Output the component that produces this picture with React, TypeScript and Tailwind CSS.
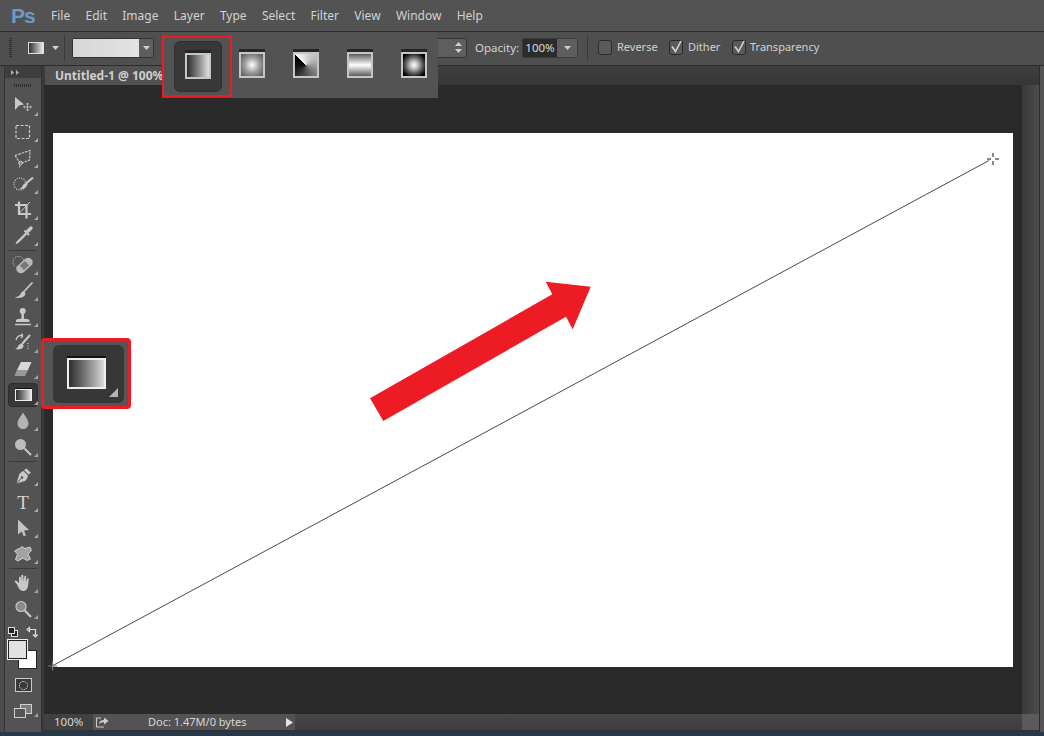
import type { ReactNode } from "react";

const MENU = ["File", "Edit", "Image", "Layer", "Type", "Select", "Filter", "View", "Window", "Help"];
const INK = "#c9c9c9";

function Icon({ children }: { children: ReactNode }) {
  return (
    <svg width="24" height="24" viewBox="0 0 24 24" fill="none" stroke={INK} strokeWidth="1">
      {children}
    </svg>
  );
}

// little flyout marker in the corner of a tool slot
function Corner() {
  return (
    <svg width="4" height="4" viewBox="0 0 4 4" className="absolute bottom-[3px] right-[3px]">
      <polygon points="4,0 4,4 0,4" fill="#a8a8a8" />
    </svg>
  );
}

function Tool({ children, active }: { children: ReactNode; active?: boolean }) {
  return (
    <div className="relative flex h-[26px] w-full items-center justify-center">
      {active && <div className="absolute inset-x-[3px] inset-y-[1px] rounded-sm border border-[#2e2e2e] bg-[#383838]" />}
      <div className="relative flex items-center justify-center">{children}</div>
      <Corner />
    </div>
  );
}

function Separator() {
  return <div className="mx-[4px] my-[1px] h-px bg-[#3a3a3a]" />;
}

function Swatch({ className }: { className: string }) {
  return <div className={`border-2 border-[#c6c6c6] shadow-[0_-3px_0_#262626] ${className}`} />;
}

function Caret() {
  return (
    <svg width="7" height="4" viewBox="0 0 7 4">
      <polygon points="0,0 7,0 3.5,4" fill="#d0d0d0" />
    </svg>
  );
}

function Checkbox({ checked }: { checked?: boolean }) {
  return (
    <div className="relative h-[15px] w-[14px] shrink-0 rounded-[3px] border border-[#2a2a2a] bg-[#5a5a5a]">
      {checked && (
        <svg width="14" height="15" viewBox="0 0 14 15" className="absolute -left-px -top-[2px]">
          <polyline points="3,7.500 6.500,12.500 12,2" fill="none" stroke="#d4d4d4" strokeWidth="1.600" />
        </svg>
      )}
    </div>
  );
}

function MenuBar() {
  return (
    <div className="flex h-[32px] items-center border-b border-[#2c2c2c] bg-[#535353]">
      <span className="ml-[11px] w-[40px] font-['Liberation_Sans',sans-serif] text-[21px] font-bold leading-none tracking-[-1px] text-[#6d9ac4]">Ps</span>
      <div className="flex gap-[15.300px] text-[12px] text-[#d2d2d2]">
        {MENU.map((m) => (
          <span key={m}>{m}</span>
        ))}
      </div>
    </div>
  );
}

function OptionsBar() {
  return (
    <div className="flex h-[34px] items-center border-b border-[#2c2c2c] bg-[#4f4f4f] pb-[2px] text-[11px] text-[#d2d2d2]">
      <div className="ml-[9px] h-[20px] w-[3px] bg-[repeating-linear-gradient(to_bottom,#2e2e2e_0,#2e2e2e_1px,transparent_1px,transparent_2px)]" />
      <div className="ml-[16px] h-[12px] w-[16px] border border-[#ddd] bg-gradient-to-r from-[#333] to-[#eee]" />
      <div className="ml-[8px]"><Caret /></div>
      <div className="ml-[5px] h-[24px] w-px bg-[#3a3a3a]" />
      <div className="ml-[7px] flex h-[20px] w-[82px] rounded-[2px] border border-[#333]">
        <div className="flex-1 bg-gradient-to-r from-[#d6d6d6] to-[#e4e4e4]" />
        <div className="flex w-[14px] items-center justify-center bg-[#5e5e5e]"><Caret /></div>
      </div>
      {/* mode select, mostly hidden by the flyout */}
      <div className="ml-[245px] flex h-[20px] w-[68px] items-center justify-end rounded-[2px] border border-[#333] bg-[#5e5e5e] pr-[4px]">
        <svg width="7" height="11" viewBox="0 0 7 11">
          <polygon points="3.5,0 7,4 0,4" fill="#d0d0d0" />
          <polygon points="0,7 7,7 3.5,11" fill="#d0d0d0" />
        </svg>
      </div>
      <span className="ml-[8px] w-[47px] text-[11.500px]">Opacity:</span>
      <div className="flex h-[20px] w-[56px] rounded-[2px] border border-[#3a3a3a]">
        <div className="flex flex-1 items-center justify-center bg-[#2b2b2b] text-[11.500px] text-[#dcdcdc]">100%</div>
        <div className="flex w-[20px] items-center justify-center bg-[#5e5e5e]"><Caret /></div>
      </div>
      <div className="ml-[9px] h-[24px] w-px bg-[#3a3a3a]" />
      <div className="ml-[10px]"><Checkbox /></div>
      <span className="ml-[5px] w-[52px]">Reverse</span>
      <Checkbox checked />
      <span className="ml-[5px] w-[44px]">Dither</span>
      <Checkbox checked />
      <span className="ml-[4px]">Transparency</span>
    </div>
  );
}

function Toolbar() {
  return (
    <div className="flex w-[38px] shrink-0 flex-col border-x border-[#333] bg-[#535353]">
      <div className="flex h-[12px] items-center bg-[#3e3e3e] pl-[6px] text-[8px] leading-none text-[#aaa]">
        <svg width="9" height="5" viewBox="0 0 9 5">
          <polygon points="0,0 3,2.5 0,5" fill="#b0b0b0" />
          <polygon points="5,0 8,2.5 5,5" fill="#b0b0b0" />
        </svg>
      </div>
      <div className="flex h-[15px] items-center justify-center">
        <div className="h-[3px] w-[18px] bg-[repeating-linear-gradient(to_right,#2e2e2e_0,#2e2e2e_1px,transparent_1px,transparent_2px)]" />
      </div>

      <Tool>
        <Icon>
          <polygon points="4,3 13,10.5 8,11.5 4,16" fill={INK} stroke="none" />
          <path d="M16.5 9v8M12.5 13h8M15.2 10.5l1.3-1.5 1.3 1.5M15.2 15.5l1.3 1.5 1.3-1.5M14 11.7l-1.5 1.3 1.5 1.3M19 11.7l1.5 1.3-1.5 1.3" strokeWidth="0.8" />
        </Icon>
      </Tool>
      <Tool>
        <Icon>
          <rect x="5" y="5.5" width="13.5" height="13" strokeDasharray="3 1.5" strokeWidth="1.2" />
        </Icon>
      </Tool>
      <Tool>
        <Icon>
          <path d="M4 9.5L19 4.5 18.5 14 9.5 17.5Z" strokeDasharray="2.5 1" strokeWidth="1.2" />
          <circle cx="9.5" cy="17" r="1.8" strokeWidth="1" />
          <path d="M9 19l-.5 2.5" />
        </Icon>
      </Tool>
      <Tool>
        <Icon>
          <circle cx="9" cy="12" r="6" strokeDasharray="1.2 1.2" strokeWidth="1.2" />
          <path d="M22 5.5L15 11.5" strokeWidth="2.2" />
          <path d="M15.5 11c-2 0-3 .7-4 3-.5 1.3-2 2.5-3.5 2.8 3.5 1 7.5-.5 8.500-4.500Z" fill={INK} stroke="none" />
        </Icon>
      </Tool>
      <Tool>
        <Icon>
          <path d="M8 3.500V16h12M4 7h11.500V20.500" strokeWidth="2.200" />
          <path d="M8 15.500L19 4" strokeWidth="1" />
        </Icon>
      </Tool>
      <Tool>
        <Icon>
          <path d="M17 7L20 4" strokeWidth="3.500" strokeLinecap="round" />
          <path d="M13.500 6.500L18 11" strokeWidth="2" />
          <path d="M15 9L6.500 17.500 5 19.500 7 18.500 15.500 10" fill="#3a3a3a" strokeWidth="1.200" />
        </Icon>
      </Tool>
      <Separator />
      <Tool>
        <Icon>
          <circle cx="7.500" cy="9" r="5.500" strokeDasharray="1.2 1.2" strokeWidth="1" />
          <rect x="4" y="8" width="19" height="9" rx="4.500" transform="rotate(-42 13.500 12.500)" fill="#b8b8b8" stroke="none" />
          <rect x="10" y="9.500" width="7" height="6" transform="rotate(-42 13.500 12.500)" fill="#777" stroke="none" />
        </Icon>
      </Tool>
      <Tool>
        <Icon>
          <path d="M21.500 3.500L13 12.500" strokeWidth="1.800" />
          <path d="M12.500 12c-1.500.500-2.500 1.500-3 3-.500 1.500-2 2.500-6 3.500 4 .800 9 .500 10.500-2.500.600-1.300.500-2.700-1.500-4Z" fill={INK} stroke="none" />
        </Icon>
      </Tool>
      <Tool>
        <Icon>
          <circle cx="11.700" cy="6" r="3" fill={INK} stroke="none" />
          <path d="M11.700 8v6" strokeWidth="2.500" />
          <path d="M5 15.500c0-1.500 3-1.800 6.700-1.800s6.700.300 6.700 1.800V17H5Z" fill={INK} stroke="none" />
          <path d="M4 19.500h16" strokeWidth="1.500" />
        </Icon>
      </Tool>
      <Tool>
        <Icon>
          <path d="M5 9c1-3.500 3.500-5 7-4.500M12 4.500L10 2.800M12 4.500L10 7" strokeWidth="1.300" />
          <path d="M19 4L11 13" strokeWidth="2" />
          <path d="M10.500 12.500c-2 .500-3 1.500-3.500 3-.400 1.200-1.500 2-3 2.500 3 .800 7 .500 8.300-2 .500-1.200.200-2.500-1.800-3.500Z" fill={INK} stroke="none" />
          <path d="M17 12v7" strokeDasharray="1 1.500" strokeWidth="1.200" />
        </Icon>
      </Tool>
      <Tool>
        <Icon>
          <path d="M10 5h10.500l-3.500 8H6Z" fill="#d8d8d8" stroke="none" />
          <path d="M6 13h11l-3 6H3.500Z" fill="#9a9a9a" stroke="none" />
        </Icon>
      </Tool>
      <Tool active>
        <div className="h-[12px] w-[17px] border border-[#eee] bg-gradient-to-r from-[#2e2e2e] to-[#e6e6e6] shadow-[0_-1px_0_#111]" />
      </Tool>
      <Tool>
        <Icon>
          <path d="M12 3.500c-2 3.500-5.500 7.500-5.500 11a5.500 5.500 0 0 0 11 0c0-3.500-3.500-7.500-5.500-11Z" fill="#b4b4b4" stroke="none" />
        </Icon>
      </Tool>
      <Tool>
        <Icon>
          <circle cx="9.500" cy="9.500" r="5.500" fill="#bdbdbd" stroke="none" />
          <path d="M13.500 13.500L20 20" strokeWidth="2" />
        </Icon>
      </Tool>
      <Separator />
      <Tool>
        <Icon>
          <path d="M15.500 4.500L20 9l-2.500 1.500-4.500-4.500Z" fill={INK} stroke="none" />
          <path d="M12.500 7L17 11.500c-.500 2.500-1.500 4.500-3 5.500l-8.500 2.500L8 11c1-2 2.500-3.500 4.500-4Z" fill={INK} stroke="none" />
          <path d="M5.500 19.500L10.500 14" stroke="#535353" />
          <circle cx="11" cy="13.500" r="1.200" fill="#535353" stroke="none" />
        </Icon>
      </Tool>
      <Tool>
        <span className="font-['Liberation_Serif',serif] text-[19px] leading-none text-[#d4d4d4]">T</span>
      </Tool>
      <Tool>
        <Icon>
          <polygon points="7,3.500 18,14 13,14.500 15,19.500 12.500,20 10.800,15.500 7,18.500" fill="#c4c4c4" stroke="none" />
        </Icon>
      </Tool>
      <Tool>
        <Icon>
          <path d="M10.500 4.500l3.500 2 5-1.500 1.500 3.500-3.500 3.500 2.500 5-3.500 1.500-4-2.500-5 3-2.500-1.500 2-5.500-3-3 3.500-2 2-.500Z" fill="#a2a2a2" stroke="#d0d0d0" />
        </Icon>
      </Tool>
      <Separator />
      <Tool>
        <Icon>
          <path d="M6 13.500L4 11c-.800-1 .500-2 1.500-1.200L8 12V6.500c0-1.300 1.700-1.300 1.800 0L10.300 10.500V4.800c0-1.300 1.900-1.300 2 0l.300 5.700.800-5c.200-1.200 1.900-1 1.800.200l-.500 5.500 1.500-3.500c.500-1 1.900-.500 1.600.600L17 15c-.500 3-2 5-5 5-3 0-4.500-3-6-6.500Z" fill="#c8c8c8" stroke="none" />
        </Icon>
      </Tool>
      <Tool>
        <Icon>
          <circle cx="10" cy="9.500" r="5" fill="#8a8a8a" stroke="#c9c9c9" strokeWidth="1.200" />
          <path d="M13.800 13.500L20 20" strokeWidth="2.200" />
        </Icon>
      </Tool>

      {/* default colours and swap */}
      <div className="mt-[3px] flex h-[14px] items-center justify-between px-[3px]">
        <div className="relative h-[10px] w-[10px]">
          <div className="absolute bottom-0 right-0 h-[7px] w-[7px] border border-[#ddd] bg-[#222]" />
          <div className="absolute left-0 top-0 h-[7px] w-[7px] border border-[#ddd] bg-[#222]" />
        </div>
        <svg width="12" height="12" viewBox="0 0 12 12" fill="none" stroke="#ddd" strokeWidth="1.200">
          <path d="M3 3.500h6.500V9M1 3.500l2.500-2v4ZM9.500 11l-2-2h4Z" />
        </svg>
      </div>

      {/* foreground / background */}
      <div className="relative mx-[3px] mt-[1px] h-[29px] w-[29px]">
        <div className="absolute bottom-0 right-0 h-[19px] w-[19px] border border-[#222] bg-white" />
        <div className="absolute left-0 top-0 h-[19px] w-[19px] border border-[#222] bg-[#e2e2e2] outline outline-1 outline-[#eee]" />
      </div>

      <div className="mt-[9px] flex h-[14px] justify-center">
        <div className="flex h-[14px] w-[17px] items-center justify-center border border-[#ccc] bg-[#3a3a3a]">
          <div className="h-[9px] w-[9px] rounded-full border border-dotted border-[#eee]" />
        </div>
      </div>
      <div className="relative mt-[12px] flex h-[16px] justify-center">
        <svg width="18" height="14" viewBox="0 0 18 14">
          <rect x="6.500" y="0.500" width="11" height="9" fill="#7c7c7c" stroke="#d0d0d0" />
          <rect x="0.500" y="4.500" width="11" height="9" fill="#555" stroke="#d0d0d0" />
        </svg>
        <Corner />
      </div>
    </div>
  );
}

function DocWindow() {
  return (
    <div className="flex min-w-0 flex-1 flex-col">
      <div className="flex h-[19px] bg-gradient-to-b from-[#3f3f3f] to-[#363636]">
        <div className="ml-px w-[180px] overflow-hidden whitespace-nowrap bg-[#515151] pl-[10px] text-[12px] font-bold leading-[19px] text-[#cfcfcf]">
          Untitled-1 @ 100% (RGB/8)
        </div>
      </div>
      <div className="flex flex-1">
        <div className="flex-1 bg-[#2a2a2a] pl-[9px] pt-[48px]">
          <div className="h-[534px] w-[960px] bg-white" />
        </div>
        <div className="w-[17px] bg-gradient-to-r from-[#3a3a3a] to-[#4b4b4b]" />
      </div>
      <div className="flex h-[16px] bg-[#414141] text-[11.500px] leading-[16px] text-[#d6d6d6]">
        <div className="w-[49px] pl-[10px]">100%</div>
        <div className="flex w-[202px] items-center bg-[#535353] pl-[3px]">
          <svg width="13" height="12" viewBox="0 0 13 12" fill="none" stroke="#cfcfcf" strokeWidth="1">
            <path d="M8 11H0.500V2H5" />
            <path d="M3 8c.500-2.500 2-4 5-4V1.500L12.500 5 8 8.500V6.200C6 6.200 4.500 6.700 3 8Z" fill="#cfcfcf" stroke="none" />
          </svg>
          <span className="ml-[39px] w-[138px] text-[11px]">Doc: 1.47M/0 bytes</span>
          <svg width="7" height="9" viewBox="0 0 7 9">
            <polygon points="0,0 7,4.500 0,9" fill="#e4e4e4" />
          </svg>
        </div>
        <div className="flex-1 bg-gradient-to-b from-[#474747] to-[#3d3d3d]" />
        <div className="w-[17px] bg-[#5a5a5a]" />
      </div>
      <div className="h-[2px] bg-[#333]" />
    </div>
  );
}

function GradientFlyout() {
  const swatch = "h-[26px] w-[26px]";
  return (
    <div className="absolute left-[162px] top-[32px] flex h-[66px] w-[276px] items-center bg-[#535353] pl-[12px]">
      <div className="mt-[2px] flex h-[51px] w-[48px] items-center justify-center rounded-md border border-[#2f2f2f] bg-[#383838]">
        <Swatch className={`${swatch} bg-gradient-to-r from-[#2e2e2e] to-[#e2e2e2]`} />
      </div>
      <div className="ml-[17px] flex gap-[28px]">
        <Swatch className={`${swatch} bg-[radial-gradient(circle,#ffffff_0%,#9a9a9a_50%,#555555_100%)]`} />
        <Swatch className={`${swatch} bg-[conic-gradient(from_315deg,#f4f4f4,#b4b4b4_30%,#5a5a5a_60%,#111111_85%,#000000)]`} />
        <Swatch className={`${swatch} bg-[linear-gradient(to_bottom,#5a5a5a,#ffffff_50%,#5a5a5a)]`} />
        <Swatch className={`${swatch} bg-[radial-gradient(circle,#ffffff_0%,#c0c0c0_25%,#5a5a5a_55%,#000000_85%)]`} />
      </div>
    </div>
  );
}

function GradientCallout() {
  return (
    <div className="absolute left-[41px] top-[338px] flex h-[71px] w-[90px] items-center justify-center rounded-[4px] border-[3px] border-[#ed1c24] bg-[#555555]">
      <div className="relative ml-[4px] flex h-[58px] w-[71px] items-center justify-center rounded-md bg-[#373737]">
        <div className="mr-[4px] h-[31px] w-[39px] border-2 border-[#eeeeee] bg-gradient-to-r from-[#2e2e2e] to-[#d9d9d9] shadow-[0_-2px_0_#141414]" />
        <svg width="9" height="9" viewBox="0 0 9 9" className="absolute bottom-[6px] right-[6px]">
          <polygon points="9,0 9,9 0,9" fill="#b4b4b4" />
        </svg>
      </div>
    </div>
  );
}

export default function App() {
  return (
    <div className="relative flex h-[736px] w-[1044px] flex-col overflow-hidden bg-[#4f4f4f] font-['Noto_Sans',sans-serif]">
      <MenuBar />
      <OptionsBar />
      <div className="flex h-[666px]">
        <div className="w-[4px] shrink-0 bg-[#4c4c4c]" />
        <Toolbar />
        <div className="w-[2px] shrink-0 bg-[#3a3a3a]" />
        <DocWindow />
        <div className="w-[5px] shrink-0 border-l border-[#2c2c2c] bg-[#555555]" />
      </div>
      <div className="h-[4px] bg-[#26384a]" />

      <GradientFlyout />
      <div className="absolute left-[162px] top-[36px] h-[61px] w-[70px] border-2 border-[#ed1c24]" />
      <GradientCallout />

      {/* drag line, cursor and the red annotation arrow */}
      <svg width="1044" height="736" viewBox="0 0 1044 736" className="pointer-events-none absolute left-0 top-0">
        <line x1="53" y1="665.500" x2="989" y2="160.500" stroke="#333333" strokeWidth="0.900" />
        <path d="M48 666h9M52.500 661.500v9" stroke="#777777" strokeWidth="1.200" />
        <path d="M987 159h4M995 159h4M993 153v4M993 161v4" stroke="#111111" strokeWidth="1" />
        <polygon points="370,398.300 383.300,421 566,316.700 572.700,329.300 590.700,286.700 545.700,281.700 552.300,294.300" fill="#ed1c24" />
      </svg>
    </div>
  );
}
